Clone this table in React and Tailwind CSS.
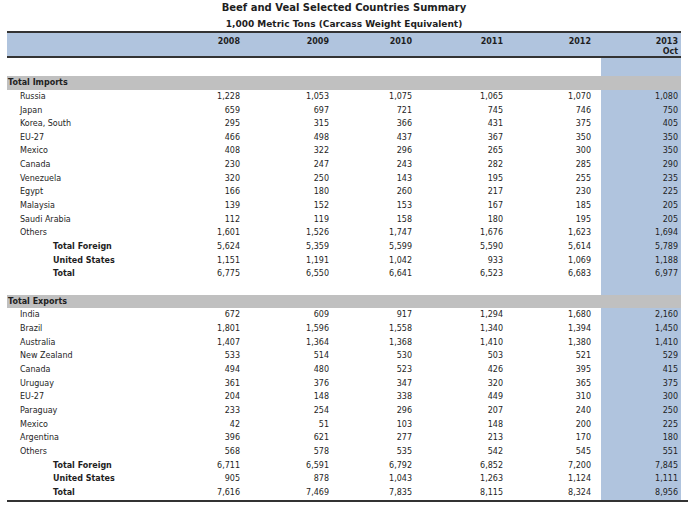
import React from 'react';

const cols = 'grid grid-cols-[148px_87px_89px_83px_91px_96px_80px]';

const imports = [
  ['Russia', '1,228', '1,053', '1,075', '1,065', '1,070', '1,080'],
  ['Japan', '659', '697', '721', '745', '746', '750'],
  ['Korea, South', '295', '315', '366', '431', '375', '405'],
  ['EU-27', '466', '498', '437', '367', '350', '350'],
  ['Mexico', '408', '322', '296', '265', '300', '350'],
  ['Canada', '230', '247', '243', '282', '285', '290'],
  ['Venezuela', '320', '250', '143', '195', '255', '235'],
  ['Egypt', '166', '180', '260', '217', '230', '225'],
  ['Malaysia', '139', '152', '153', '167', '185', '205'],
  ['Saudi Arabia', '112', '119', '158', '180', '195', '205'],
  ['Others', '1,601', '1,526', '1,747', '1,676', '1,623', '1,694'],
];
const importTotals = [
  ['Total Foreign', '5,624', '5,359', '5,599', '5,590', '5,614', '5,789'],
  ['United States', '1,151', '1,191', '1,042', '933', '1,069', '1,188'],
  ['Total', '6,775', '6,550', '6,641', '6,523', '6,683', '6,977'],
];

const exportsRows = [
  ['India', '672', '609', '917', '1,294', '1,680', '2,160'],
  ['Brazil', '1,801', '1,596', '1,558', '1,340', '1,394', '1,450'],
  ['Australia', '1,407', '1,364', '1,368', '1,410', '1,380', '1,410'],
  ['New Zealand', '533', '514', '530', '503', '521', '529'],
  ['Canada', '494', '480', '523', '426', '395', '415'],
  ['Uruguay', '361', '376', '347', '320', '365', '375'],
  ['EU-27', '204', '148', '338', '449', '310', '300'],
  ['Paraguay', '233', '254', '296', '207', '240', '250'],
  ['Mexico', '42', '51', '103', '148', '200', '225'],
  ['Argentina', '396', '621', '277', '213', '170', '180'],
  ['Others', '568', '578', '535', '542', '545', '551'],
];
const exportTotals = [
  ['Total Foreign', '6,711', '6,591', '6,792', '6,852', '7,200', '7,845'],
  ['United States', '905', '878', '1,043', '1,263', '1,124', '1,111'],
  ['Total', '7,616', '7,469', '7,835', '8,115', '8,324', '8,956'],
];

const pads = ['pr-[2px]', 'pr-[2px]', 'pr-[2px]', 'pr-[2px]', 'pr-[10px]', 'pr-[3px]'];

function Row({ row, total }) {
  return (
    <div className={`${cols} h-[13.67px] leading-[13.67px]`}>
      <div className={total ? 'pl-[46px] font-bold' : 'pl-[13px]'}>{row[0]}</div>
      {row.slice(1).map((v, i) => (
        <div key={i} className={`text-right ${pads[i]} ${i === 5 ? 'bg-[#b0c4de]' : ''}`}>
          {v}
        </div>
      ))}
    </div>
  );
}

function Blank({ h }) {
  return (
    <div className={`${cols} ${h}`}>
      <div className="col-start-7 bg-[#b0c4de]" />
    </div>
  );
}

function Section({ title, rows, totals }) {
  return (
    <>
      <div className="h-[13.67px] leading-[13.67px] bg-[#c0c0c0] pl-[1px] font-bold">{title}</div>
      {rows.map((r) => (
        <Row key={r[0]} row={r} />
      ))}
      {totals.map((r) => (
        <Row key={r[0]} row={r} total />
      ))}
    </>
  );
}

export default function App() {
  const years = ['2008', '2009', '2010', '2011', '2012'];
  return (
    <div className="w-[688px] h-[505px] bg-white text-[#1e1e1e] font-['DejaVu_Sans',Verdana,sans-serif] text-[8px]">
      <div className="h-[15px] leading-[15px] text-center font-bold text-[10px]">
        Beef and Veal Selected Countries Summary
      </div>
      <div className="h-[16px] pt-[2px] leading-[14px] text-center font-bold text-[9px]">
        1,000 Metric Tons (Carcass Weight Equivalent)
      </div>
      <div className="ml-[7px] w-[674px]">
        <div className={`${cols} h-[27px] bg-[#b0c4de] border-t-2 border-b-2 border-[#333] font-bold leading-[10px] pt-[4px]`}>
          <div />
          {years.map((y, i) => (
            <div key={y} className={`text-right ${pads[i]}`}>{y}</div>
          ))}
          <div className="text-right pr-[3px]">
            2013
            <br />
            Oct
          </div>
        </div>
        <Blank h="h-[18.2px]" />
        <Section title="Total Imports" rows={imports} totals={importTotals} />
        <Blank h="h-[13.67px]" />
        <Section title="Total Exports" rows={exportsRows} totals={exportTotals} />
      </div>
      <div className="ml-[7px] w-[681px] border-b-2 border-[#333]" />
    </div>
  );
}
